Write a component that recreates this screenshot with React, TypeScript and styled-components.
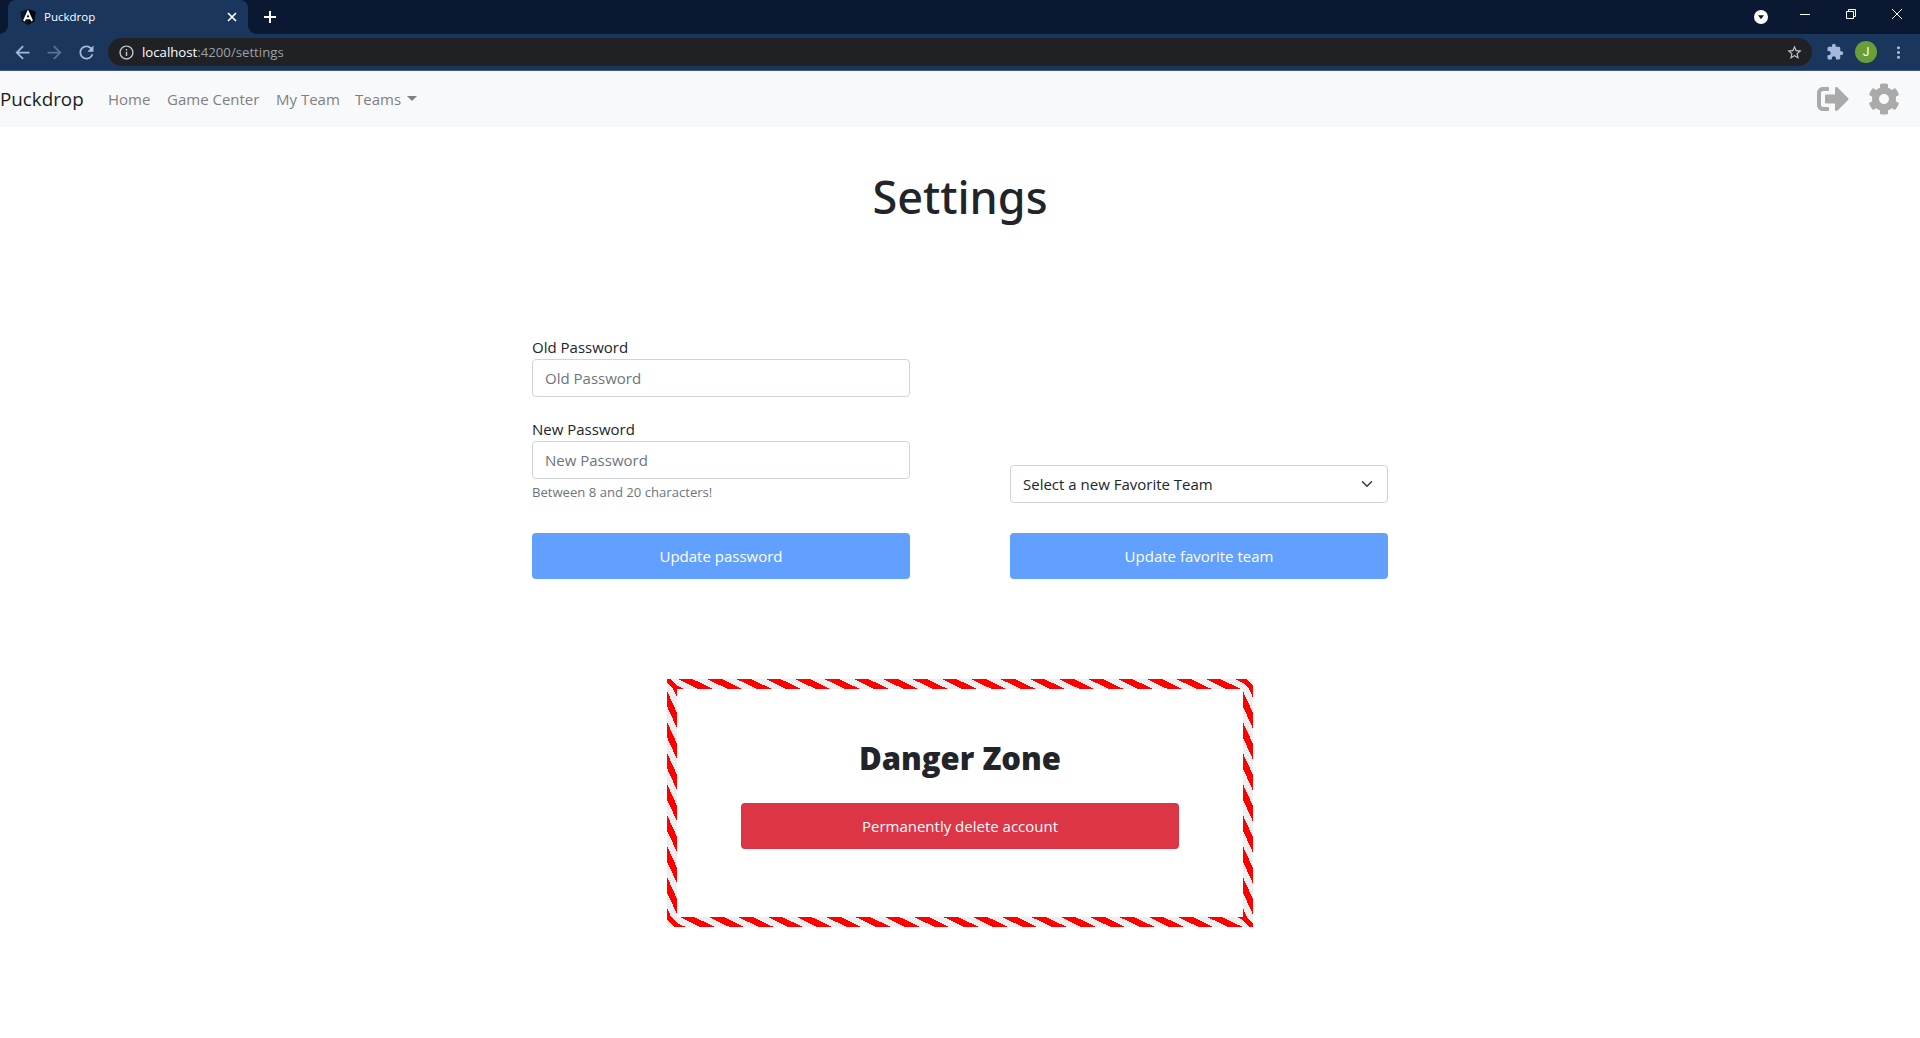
import React from "react";
import styled, { createGlobalStyle } from "styled-components";
import { FaCog, FaSignOutAlt } from "react-icons/fa";
import {
  MdArrowBack,
  MdArrowForward,
  MdRefresh,
  MdInfoOutline,
  MdStarBorder,
  MdExtension,
  MdMoreVert,
} from "react-icons/md";

const GlobalStyle = createGlobalStyle`
  *, *::before, *::after { box-sizing: border-box; }
  body {
    margin: 0;
    background: #fff;
    color: #212529;
    font: 400 15px/24px "Open Sans", "Noto Sans", sans-serif;
  }
  input, button { font: inherit; letter-spacing: inherit; margin: 0; }
`;

const Screen = styled.div`
  display: flex;
  flex-direction: column;
  width: 100%;
  height: 1038px;
  overflow: hidden;
`;

const TabStrip = styled.div`
  display: flex;
  height: 34px;
  padding-left: 8px;
  background: #0a1931;
`;

const Tab = styled.div`
  position: relative;
  display: flex;
  align-items: center;
  width: 240px;
  height: 34px;
  padding: 0 11px 0 12px;
  border-radius: 8px 8px 0 0;
  background: #1a365d;
  color: #fff;
  &::before,
  &::after {
    content: "";
    position: absolute;
    bottom: 0;
    width: 8px;
    height: 8px;
  }
  &::before {
    left: -8px;
    background: radial-gradient(circle at 0 0, transparent 7.5px, #1a365d 8px);
  }
  &::after {
    right: -8px;
    background: radial-gradient(circle at 100% 0, transparent 7.5px, #1a365d 8px);
  }
`;

const TabTitle = styled.span`
  flex: 1;
  margin-left: 8px;
  font-size: 11.5px;
  line-height: 16px;
`;

const NewTab = styled.div`
  display: flex;
  align-items: center;
  margin-left: 16px;
`;

const WindowControls = styled.div`
  display: flex;
  align-items: center;
  margin-left: auto;
  padding-right: 16px;
`;

const ControlSlot = styled.span<{ $gap: number; $lift?: number }>`
  display: flex;
  margin-right: ${(p) => p.$gap}px;
  padding-bottom: ${(p) => p.$lift ?? 0}px;
`;

const Toolbar = styled.div`
  display: flex;
  align-items: center;
  height: 37px;
  padding: 0 12px 0;
  border-bottom: 1px solid #3b5680;
  background: #1a365d;
  color: #a6b9dc;
`;

const ToolIcon = styled.span<{ $dim?: boolean }>`
  display: flex;
  justify-content: center;
  width: 20px;
  margin-right: 12px;
  opacity: ${(p) => (p.$dim ? 0.45 : 1)};
  svg { flex: none; }
`;

const Omnibox = styled.div`
  display: flex;
  flex: 1;
  align-items: center;
  height: 28px;
  margin-right: 14px;
  padding: 0 9px 0 10px;
  border-radius: 14px;
  background: #202124;
  color: #c4c7cb;
`;

const Url = styled.span`
  flex: 1;
  margin-left: 7px;
  color: #9aa0a6;
  font-size: 13.2px;
  line-height: 20px;
  b { color: #fff; font-weight: 400; }
`;

const Avatar = styled.span`
  display: flex;
  align-items: center;
  justify-content: center;
  width: 22px;
  height: 22px;
  margin: 0 12px 0 11px;
  border-radius: 50%;
  background: #689f38;
  color: #fff;
  font: 400 12px/22px Roboto, sans-serif;
`;

const Navbar = styled.nav`
  display: flex;
  align-items: center;
  height: 56px;
  padding-right: 20px;
  background: #f8f9fa;
`;

const Brand = styled.a`
  width: 84px;
  margin-right: 24px;
  color: #1a1d20;
  font-size: 18.8px;
  line-height: 30px;
`;

const NavLink = styled.a<{ $width: number }>`
  display: flex;
  align-items: center;
  width: ${(p) => p.$width}px;
  margin-right: 16px;
  color: #7f8081;
  white-space: nowrap;
`;

const Caret = styled.span`
  margin-left: 6px;
  margin-bottom: 2px;
  border: 5px solid transparent;
  border-top-color: currentColor;
  border-bottom: 0;
`;

const NavActions = styled.div`
  display: flex;
  gap: 19px;
  margin-left: auto;
  color: #aaa;
  font-size: 32px;
`;

const Page = styled.main`
  display: flex;
  flex-direction: column;
  align-items: center;
`;

const Title = styled.h1`
  margin: 41px 0 0;
  font-family: "Noto Sans", "Open Sans", sans-serif;
  font-size: 45px;
  font-weight: 500;
  line-height: 58px;
`;

const Forms = styled.div`
  display: flex;
  align-items: flex-end;
  gap: 100px;
  margin-top: 109px;
`;

const Form = styled.form`
  display: flex;
  flex-direction: column;
  width: 378px;
`;

const Label = styled.label`
  line-height: 24px;
`;

const Input = styled.input`
  height: 38px;
  padding: 0 12px;
  border: 1px solid #ced4da;
  border-radius: 4px;
  background: #fff;
  &::placeholder { color: #6c757d; opacity: 1; }
`;

const Spacer = styled.div`
  height: 20px;
`;

const Hint = styled.small`
  margin-top: 3px;
  color: #6c757d;
  font-size: 13.1px;
  line-height: 21px;
`;

const Select = styled.div`
  display: flex;
  align-items: center;
  justify-content: space-between;
  height: 38px;
  padding: 0 12px;
  border: 1px solid #ced4da;
  border-radius: 4px;
`;

const Button = styled.button<{ $danger?: boolean }>`
  height: 46px;
  margin-top: ${(p) => (p.$danger ? 26 : 30)}px;
  padding: 0;
  border: 0;
  border-radius: 4px;
  background: ${(p) => (p.$danger ? "#dc3545" : "#62a0ff")};
  color: #fff;
`;

const DangerZone = styled.section`
  display: flex;
  flex-direction: column;
  width: 586px;
  height: 248px;
  margin-top: 100px;
  padding: 50px 64px 0;
  border: 10px solid;
  border-image: repeating-linear-gradient(45deg, #eee, #eee 10px, red 10px, red 20px) 20;
`;

const DangerTitle = styled.h2`
  margin: 0;
  font-size: 31px;
  font-weight: 800;
  line-height: 38px;
  text-align: center;
`;

export default function App() {
  return (
    <Screen>
      <GlobalStyle />
      <TabStrip>
        <Tab>
          <svg width="16" height="16" viewBox="0 0 16 16" fill="none">
            <path d="M8 0l7.5 2.7-1.1 9.6L8 16l-6.4-3.7L.5 2.7z" fill="#0d1520" />
            <path d="M8 0l7.5 2.7-1.1 9.6L8 16z" fill="#05090f" />
            <path d="M3.9 12L8 2.9 12.1 12M5.6 9.3h4.8" stroke="#fff" strokeWidth="1.9" />
          </svg>
          <TabTitle>Puckdrop</TabTitle>
          <svg width="10" height="10" viewBox="0 0 10 10" stroke="#fff" strokeWidth="1.7">
            <path d="M1 1l8 8M9 1l-8 8" />
          </svg>
        </Tab>
        <NewTab>
          <svg width="12" height="12" viewBox="0 0 12 12" stroke="#fff" strokeWidth="2">
            <path d="M6 0v12M0 6h12" />
          </svg>
        </NewTab>
        <WindowControls>
          <ControlSlot $gap={32}>
            <svg width="14" height="14" viewBox="0 0 14 14">
              <circle cx="7" cy="7" r="7" fill="#fff" />
              <path d="M4 5.2h6L7 9.2z" fill="#0a1931" />
            </svg>
          </ControlSlot>
          <ControlSlot $gap={36} $lift={6}>
            <svg width="10" height="10" viewBox="0 0 10 10">
              <path d="M0 5.5h10" stroke="#fff" />
            </svg>
          </ControlSlot>
          <ControlSlot $gap={36} $lift={6}>
            <svg width="10" height="10" viewBox="0 0 10 10" fill="none" stroke="#fff">
              <path d="M.5 2.5h7v7h-7zM2.5 2V.5h7v7H8" />
            </svg>
          </ControlSlot>
          <ControlSlot $gap={2} $lift={6}>
            <svg width="10" height="10" viewBox="0 0 10 10" stroke="#fff">
              <path d="M0 0l10 10M10 0L0 10" />
            </svg>
          </ControlSlot>
        </WindowControls>
      </TabStrip>

      <Toolbar>
        <ToolIcon><MdArrowBack size={21} /></ToolIcon>
        <ToolIcon $dim><MdArrowForward size={21} /></ToolIcon>
        <ToolIcon><MdRefresh size={21} /></ToolIcon>
        <Omnibox>
          <MdInfoOutline size={17} />
          <Url>
            <b>localhost</b>:4200/settings
          </Url>
          <MdStarBorder size={17} />
        </Omnibox>
        <MdExtension size={18} />
        <Avatar>J</Avatar>
        <MdMoreVert size={19} />
      </Toolbar>

      <Navbar>
        <Brand>Puckdrop</Brand>
        <NavLink $width={43}>Home</NavLink>
        <NavLink $width={93}>Game Center</NavLink>
        <NavLink $width={63}>My Team</NavLink>
        <NavLink $width={64}>
          Teams
          <Caret />
        </NavLink>
        <NavActions>
          <FaSignOutAlt />
          <FaCog />
        </NavActions>
      </Navbar>

      <Page>
        <Title>Settings</Title>
        <Forms>
          <Form>
            <Label>Old Password</Label>
            <Input placeholder="Old Password" />
            <Spacer />
            <Label>New Password</Label>
            <Input placeholder="New Password" />
            <Hint>Between 8 and 20 characters!</Hint>
            <Button type="button">Update password</Button>
          </Form>
          <Form>
            <Select>
              Select a new Favorite Team
              <svg width="16" height="12" viewBox="0 0 16 16" fill="none" stroke="#343a40" strokeWidth="2" strokeLinecap="round" strokeLinejoin="round">
                <path d="M2 5l6 6 6-6" />
              </svg>
            </Select>
            <Button type="button">Update favorite team</Button>
          </Form>
        </Forms>
        <DangerZone>
          <DangerTitle>Danger Zone</DangerTitle>
          <Button type="button" $danger>Permanently delete account</Button>
        </DangerZone>
      </Page>
    </Screen>
  );
}
